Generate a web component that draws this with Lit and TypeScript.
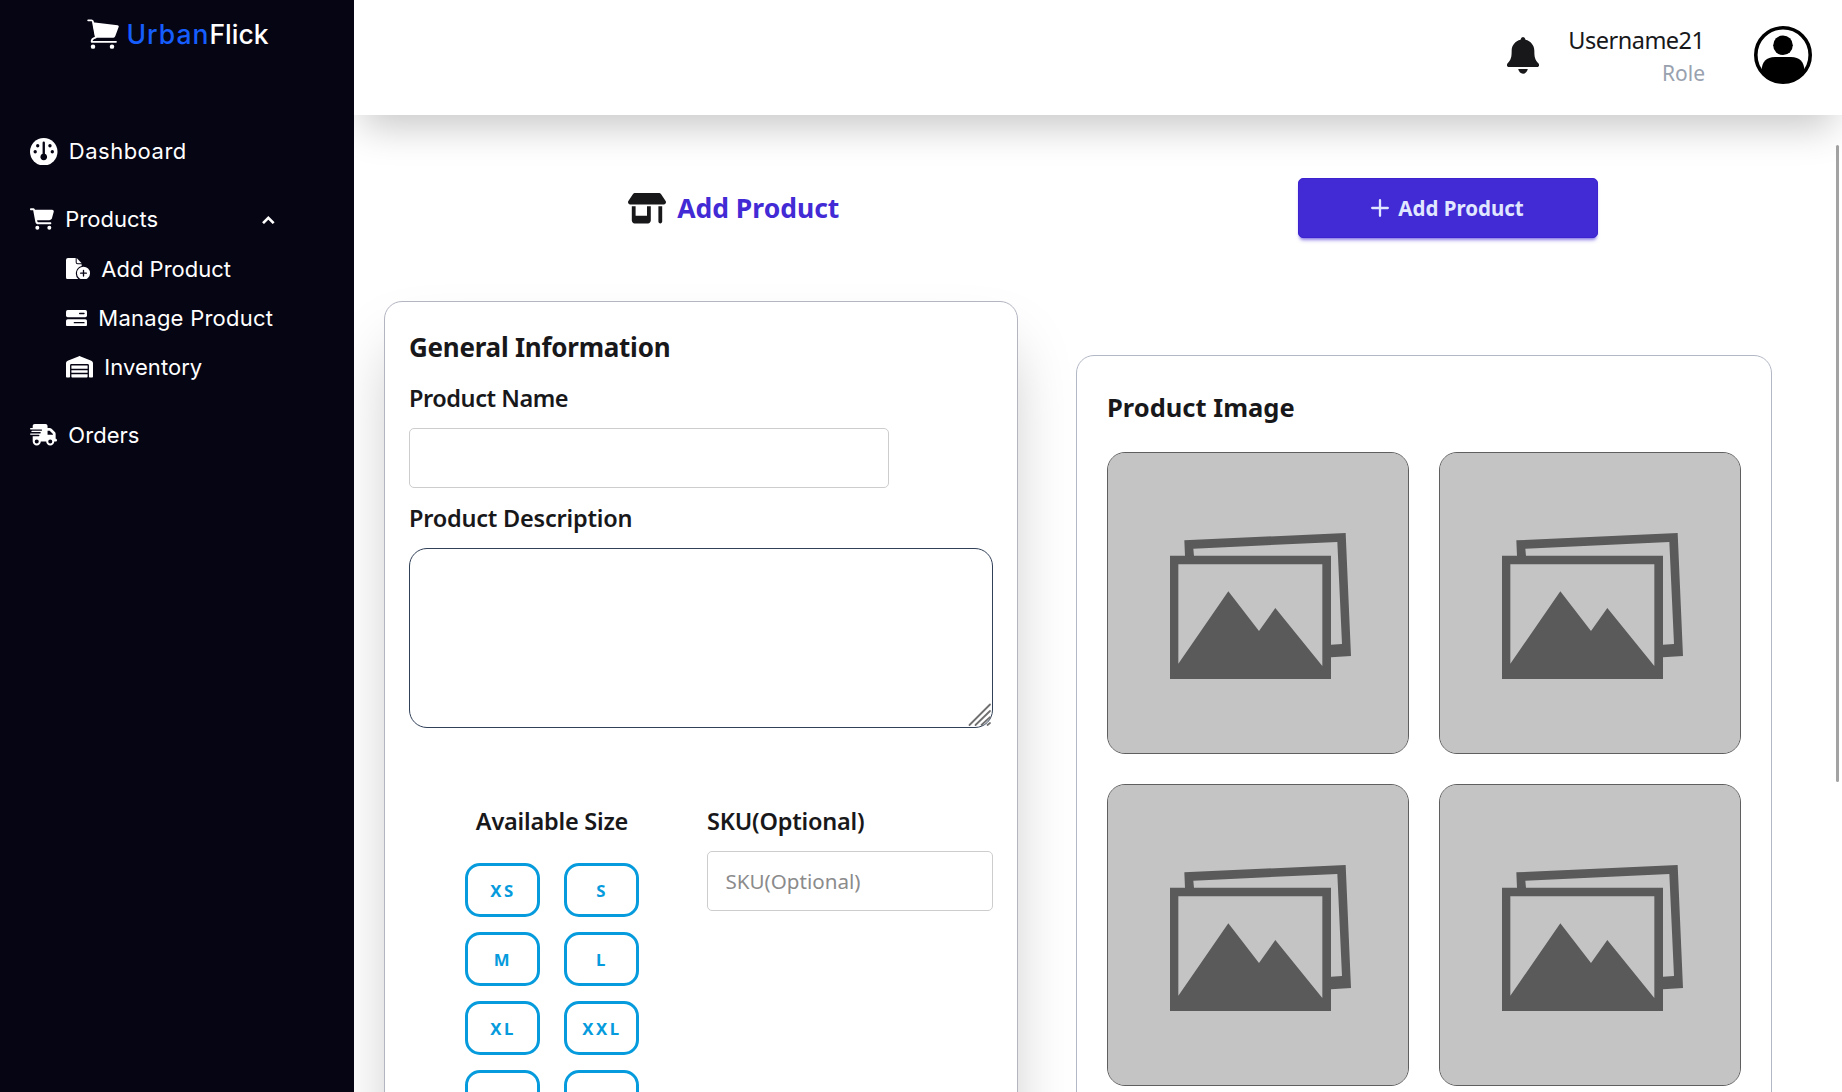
import { LitElement, html, css, svg } from "lit";
import { customElement, property } from "lit/decorators.js";

const icons: Record<string, unknown> = {
  cart: svg`<svg viewBox="0 0 576 512" width="24" height="22"><path fill="currentColor" d="M0 24C0 10.7 10.7 0 24 0H69.5c22 0 41.5 12.8 50.6 32h411c26.3 0 45.5 25 38.6 50.4l-41 152.3c-8.5 31.4-37 53.3-69.5 53.3H170.7l5.4 28.5c2.2 11.3 12.1 19.5 23.6 19.5H488c13.3 0 24 10.7 24 24s-10.7 24-24 24H199.7c-34.6 0-64.3-24.6-70.7-58.5L77.4 54.5c-.7-3.8-4-6.5-7.9-6.5H24C10.7 48 0 37.3 0 24zM128 464a48 48 0 1 1 96 0 48 48 0 1 1-96 0zm336-48a48 48 0 1 1 0 96 48 48 0 1 1 0-96z"/></svg>`,
  gauge: svg`<svg viewBox="89 415 82 82" width="27.5" height="27.5"><circle cx="130" cy="456" r="41" fill="currentColor"/><g fill="#060514"><path d="M126.5 429a3.5 3.5 0 0 1 7 0v33a10 10 0 1 1-7 0z"/><circle cx="112" cy="438" r="5"/><circle cx="148.500" cy="438" r="5"/><circle cx="104.500" cy="456" r="5"/><circle cx="155.500" cy="456" r="5"/></g></svg>`,
  addFile: svg`<svg viewBox="198 205 72 65" width="24" height="21.7"><path fill="currentColor" d="M204 205h23v13q0 6 6 6h12v5a23 23 0 0 0-9 40h-32q-6 0-6-6v-52q0-6 6-6z"/><path fill="currentColor" d="M230 205l15 16h-12q-3 0-3-3z"/><circle cx="250.500" cy="250.500" r="19.500" fill="currentColor"/><path d="M250.500 242v17M242 250.500h17" stroke="#060514" stroke-width="4" stroke-linecap="round"/></svg>`,
  server: svg`<svg viewBox="198 360 63 49" width="21" height="16.300"><g fill="currentColor"><rect x="198" y="360" width="63" height="21.500" rx="5"/><rect x="198" y="387.500" width="63" height="21.500" rx="5"/></g><path d="M239 370.500h13M223 398h29" stroke="#060514" stroke-width="4" stroke-linecap="round"/></svg>`,
  warehouse: svg`<svg viewBox="0 0 640 512" width="27" height="21.600"><path fill="currentColor" d="M0 488V171.300c0-26.200 15.900-49.700 40.200-59.400L308.100 4.800c7.600-3.100 16.100-3.100 23.800 0L599.800 111.900c24.300 9.700 40.200 33.300 40.200 59.400V488c0 13.300-10.700 24-24 24H568c-13.300 0-24-10.700-24-24V224c0-17.700-14.300-32-32-32H128c-17.700 0-32 14.300-32 32V488c0 13.300-10.700 24-24 24H24c-13.300 0-24-10.700-24-24zm488 24H152c-13.300 0-24-10.700-24-24V432H512v56c0 13.300-10.700 24-24 24zM128 400V336H512v64H128zm0-96V224H512v80H128z"/></svg>`,
  truck: svg`<svg viewBox="0 0 640 512" width="27" height="21.600"><path fill="currentColor" d="M112 0C85.500 0 64 21.500 64 48V96H16c-8.800 0-16 7.200-16 16s7.200 16 16 16H272c8.800 0 16 7.200 16 16s-7.200 16-16 16H48c-8.800 0-16 7.200-16 16s7.200 16 16 16H240c8.800 0 16 7.200 16 16s-7.200 16-16 16H16c-8.800 0-16 7.200-16 16s7.200 16 16 16H208c8.800 0 16 7.200 16 16s-7.200 16-16 16H64V416c0 53 43 96 96 96s96-43 96-96H384c0 53 43 96 96 96s96-43 96-96h32c17.700 0 32-14.300 32-32s-14.300-32-32-32V237.300c0-17-6.700-33.300-18.700-45.300L512 114.700c-12-12-28.300-18.700-45.300-18.700H416V48c0-26.500-21.500-48-48-48H112zM544 237.300V256H416V160h50.700L544 237.300zM160 368a48 48 0 1 1 0 96 48 48 0 1 1 0-96zm272 48a48 48 0 1 1 96 0 48 48 0 1 1-96 0z"/></svg>`,
  shop: svg`<svg viewBox="0 0 640 512" width="38" height="30.400"><path fill="currentColor" d="M36.800 192H603.200c20.300 0 36.800-16.500 36.800-36.800c0-7.300-2.200-14.400-6.200-20.400L558.200 21.400C549.300 8 534.400 0 518.300 0H121.700c-16 0-31 8-39.900 21.400L6.200 134.700c-4 6.100-6.200 13.200-6.200 20.400C0 175.500 16.500 192 36.800 192zM64 224V384v80c0 26.500 21.500 48 48 48H336c26.500 0 48-21.500 48-48V384 224H320V384H128V224H64zm448 0V480c0 17.700 14.300 32 32 32s32-14.300 32-32V224H512z"/></svg>`,
  logo: svg`<svg viewBox="261 57 96 91" width="32" height="30.300"><g fill="none" stroke="currentColor" stroke-linejoin="round" stroke-linecap="round"><path d="M264.500 61h10q3 0 4 3l9 47" stroke-width="5.500"/><path d="M286.500 113q-12 3-11.500 12.500h73" stroke-width="5.500"/></g><path fill="currentColor" d="M278 66.500l75 9.500q4.500 1 3 5l-10 27q-1.500 5-6 5h-54z"/><circle cx="279" cy="140" r="6.700" fill="currentColor"/><circle cx="336" cy="140" r="6.700" fill="currentColor"/></svg>`,
  bell: svg`<svg viewBox="78 111 96 111" width="32" height="37"><path fill="currentColor" d="M126 111q6 0 7.500 8C149 123 160 135 160 152c0 20 2 26 12 38 5 6 1 11-4 11H84c-5 0-9-5-4-11 10-12 12-18 12-38 0-17 11-29 26.500-33q1.500-8 7.500-8z"/><path fill="currentColor" d="M111.500 207h29q-4 14-14.500 14t-14.500-14z"/></svg>`,
  avatar: svg`<svg viewBox="0 0 58 58" width="58" height="58"><defs><clipPath id="disc"><circle cx="29" cy="29" r="28"/></clipPath></defs><circle cx="29" cy="29" r="27.200" fill="#fff" stroke="#000" stroke-width="3.600"/><circle cx="29" cy="19.300" r="9.800"/><path clip-path="url(#disc)" d="M7.500 58V45Q8 31 21 31h16q13 0 13.500 14v13z"/></svg>`,
  caret: svg`<svg viewBox="787 643 38 28" width="12.700" height="9.300"><path d="M790 667.500l16-16 16 16" fill="none" stroke="currentColor" stroke-width="8"/></svg>`,
  plus: svg`<svg viewBox="0 0 18 18" width="18" height="18"><path d="M9 1.200v15.600M1.200 9h15.600" stroke="currentColor" stroke-width="2.300" stroke-linecap="round"/></svg>`,
  grip: svg`<svg viewBox="0 0 24 24" width="24" height="24"><path d="M1.500 22L22 1.500M7.500 22L22 8M13.500 22L22 14.200M19.500 22L22 20" stroke="#707070" stroke-width="1.800" stroke-linecap="round"/></svg>`,
  photo: svg`<svg viewBox="114 339 900 900" width="100%" height="100%"><rect x="111" y="336" width="906" height="906" fill="#c4c4c4"/><g fill="#5a5a5b"><path fill-rule="evenodd" d="M343 601L827 579 843 948 783 952V914L816 912 802 606 370 626 372 648H345z"/><path fill-rule="evenodd" d="M300 647H783V1017H300zM325 673V971L475 754 567 873 616 804 757 978V673z"/></g></svg>`,
};

@customElement("nav-item")
class NavItem extends LitElement {
  @property() icon = "";
  @property() label = "";
  @property({ type: Number }) tracking = 0;
  @property({ type: Boolean }) expanded = false;
  static styles = css`
    :host { display: flex; align-items: center; height: 49.3px; gap: 11.3px; color: #fff; }
    svg { display: block; flex: none; }
    .label { font: 400 22px/34px Inter, sans-serif; white-space: nowrap; }
    .caret { margin-left: auto; margin-right: 79px; }
  `;
  render() {
    return html`${icons[this.icon]}<span class="label" style="letter-spacing:${this.tracking}px">${this.label}</span>
      ${this.expanded ? html`<span class="caret">${icons.caret}</span>` : ""}`;
  }
}

@customElement("app-root")
export class AppRoot extends LitElement {
  static styles = css`
    :host { display: block; height: 1092px; overflow: hidden; color: #18181b; font-family: "Noto Sans", sans-serif; }
    * { box-sizing: border-box; }
    svg { display: block; }
    .page { display: flex; height: 1092px; background: #fff; }
    .sidebar { position: relative; z-index: 3; flex: none; width: 354px; background: #060514; color: #fff; }
    .brand { display: flex; align-items: center; gap: 7.5px; height: 68px; padding-left: 87px; font: 500 26.5px/34px Inter, sans-serif; }
    .brand .urban { color: #155dfc; letter-spacing: 1px; }
    .nav { display: flex; flex-direction: column; gap: 18.5px; padding: 58.8px 0 0 30px; }
    .sub { padding-left: 36px; }
    .body { flex: 1; min-width: 0; display: flex; flex-direction: column; }
    .header { position: relative; z-index: 2; flex: none; display: flex; align-items: center; justify-content: flex-end; height: 115px; padding-right: 30px; background: #fff; box-shadow: 0 20px 38px -8px rgba(0, 0, 0, 0.22); }
    .bell { margin: 0 29px 4px 0; }
    .user { display: flex; flex-direction: column; align-items: flex-end; margin: 0 49px 2px 0; line-height: 33px; }
    .name { font-size: 23.5px; letter-spacing: -0.5px; padding-right: 0.5px; }
    .role { font-size: 21px; color: #99a1af; }
    .avatar { margin-bottom: 5px; }
    .main { position: relative; flex: 1; min-height: 0; overflow: hidden; padding: 63px 0 0 30px; }
    .toolbar { display: grid; grid-template-columns: 715px 715px; justify-items: center; align-items: center; width: 1430px; height: 60px; margin-left: -9px; }
    .title { display: flex; align-items: center; gap: 11.5px; padding-left: 2px; font: 700 26.5px/36px "Noto Sans", sans-serif; color: #422ad5; }
    .title svg { color: #18181b; margin-top: 1px; }
    .submit { display: flex; align-items: center; justify-content: center; gap: 9px; width: 300px; height: 60px; padding: 0; border: 1px solid #3c23cf; border-radius: 5px; background: #422ad5; color: #e0e7ff; font: 700 20.5px/30px "Noto Sans", sans-serif; box-shadow: 0 3px 3px -2px rgba(66, 42, 213, 0.5), 0 4px 4px -2px rgba(66, 42, 213, 0.4); }
    .columns { display: flex; align-items: flex-start; gap: 58px; padding-top: 63px; }
    .form { flex: none; width: 634px; height: 900px; padding: 27px 24px 0; border: 1px solid #b3b5c1; border-radius: 18px; background: #fff; box-shadow: 0 38px 64px -12px rgba(0, 0, 0, 0.26); }
    .heading { margin: 0; font-size: 26px; line-height: 36px; font-weight: 700; letter-spacing: -0.25px; white-space: nowrap; }
    .label { display: block; font-size: 23.5px; line-height: 36px; font-weight: 600; letter-spacing: -0.22px; margin: 12px 0; white-space: nowrap; }
    .label.first { margin-top: 15px; letter-spacing: -0.45px; }
    .input { display: block; width: 100%; height: 60px; margin: 0; padding: 0 17.5px; border: 1px solid #cdcdcd; border-radius: 5px; background: #fff; font: 400 20.6px "Noto Sans", sans-serif; outline: none; }
    .input::placeholder { color: #8b8b8c; opacity: 1; }
    .input.name-field { width: 480px; }
    .area { position: relative; height: 180px; }
    .area textarea { display: block; width: 584px; height: 180px; margin: 0; padding: 12px; resize: none; border: 1px solid #314158; border-radius: 18px; background: #fff; outline: none; }
    .grip { position: absolute; right: 1px; bottom: 1px; }
    .split { display: grid; grid-template-columns: 286px 286px; gap: 12px; padding-top: 63px; }
    .sizes-col { display: flex; flex-direction: column; align-items: center; }
    .sizes { display: grid; grid-template-columns: 75px 75px; gap: 15px 24px; margin-top: 12px; }
    .size { height: 54px; padding: 1px 0 0 1px; border: 3px solid #069bdc; border-radius: 15px; background: #fff; color: #069bdc; font: 700 16.8px/24px "Noto Sans", sans-serif; letter-spacing: 2.5px; }
    .gallery { flex: none; width: 696px; height: 830px; margin-top: 54px; padding: 33px 30px 0; border: 1px solid #b3b8c6; border-radius: 18px; }
    .gallery .heading { font-size: 25.5px; letter-spacing: 0; }
    .tiles { display: grid; grid-template-columns: 302px 302px; gap: 30px; margin-top: 27px; }
    .tile { height: 302px; border: 1px solid #5f5f60; border-radius: 18px; overflow: hidden; background: #c4c4c4; }
    .thumb { position: absolute; z-index: 1; right: 3px; top: 30px; width: 3px; height: 637px; border-radius: 2px; background: #a3a3a3; }
  `;

  render() {
    return html`<div class="page">
      <aside class="sidebar">
        <div class="brand">${icons.logo}<div><span class="urban">Urban</span><span>Flick</span></div></div>
        <nav class="nav">
          <nav-item icon="gauge" label="Dashboard" .tracking=${0.5}></nav-item>
          <div>
            <nav-item icon="cart" label="Products" expanded></nav-item>
            <div class="sub">
              <nav-item icon="addFile" label="Add Product"></nav-item>
              <nav-item icon="server" label="Manage Product" .tracking=${0.25}></nav-item>
              <nav-item icon="warehouse" label="Inventory" .tracking=${0.05}></nav-item>
            </div>
          </div>
          <nav-item icon="truck" label="Orders" .tracking=${0.05}></nav-item>
        </nav>
      </aside>
      <div class="body">
        <header class="header">
          <div class="bell">${icons.bell}</div>
          <div class="user"><span class="name">Username21</span><span class="role">Role</span></div>
          <div class="avatar">${icons.avatar}</div>
        </header>
        <main class="main">
          <div class="toolbar">
            <div class="title">${icons.shop}<span>Add Product</span></div>
            <button class="submit">${icons.plus}<span>Add Product</span></button>
          </div>
          <div class="columns">
            <section class="form">
              <h2 class="heading">General Information</h2>
              <label class="label first">Product Name</label>
              <input class="input name-field" />
              <label class="label">Product Description</label>
              <div class="area"><textarea></textarea><span class="grip">${icons.grip}</span></div>
              <div class="split">
                <div class="sizes-col">
                  <span class="label">Available Size</span>
                  <div class="sizes">${["XS", "S", "M", "L", "XL", "XXL", "", ""].map((s) => html`<button class="size">${s}</button>`)}</div>
                </div>
                <div>
                  <label class="label">SKU(Optional)</label>
                  <input class="input" placeholder="SKU(Optional)" />
                </div>
              </div>
            </section>
            <section class="gallery">
              <h2 class="heading">Product Image</h2>
              <div class="tiles">${[0, 1, 2, 3].map(() => html`<div class="tile">${icons.photo}</div>`)}</div>
            </section>
          </div>
          <div class="thumb"></div>
        </main>
      </div>
    </div>`;
  }
}
